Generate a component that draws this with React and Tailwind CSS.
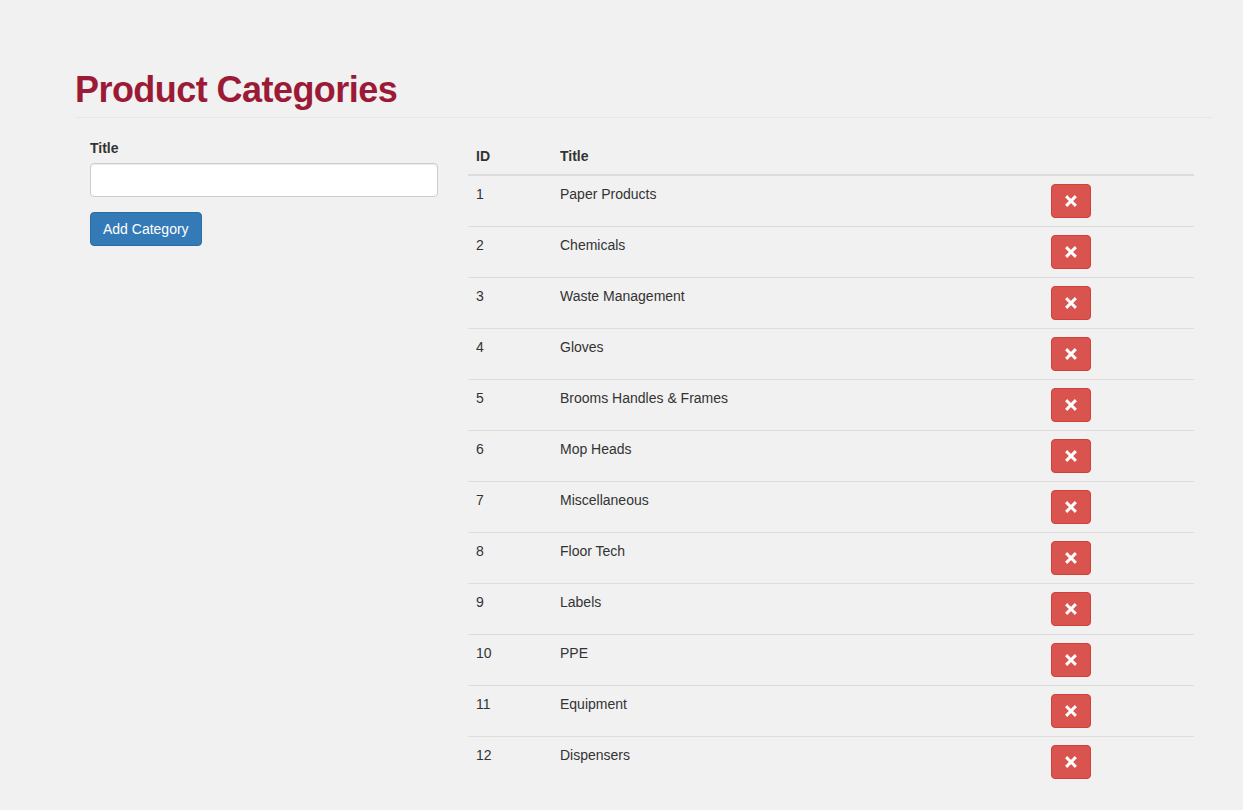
import React from "react";

const categories = [
  "Paper Products",
  "Chemicals",
  "Waste Management",
  "Gloves",
  "Brooms Handles & Frames",
  "Mop Heads",
  "Miscellaneous",
  "Floor Tech",
  "Labels",
  "PPE",
  "Equipment",
  "Dispensers",
];

const RemoveIcon = () => (
  <svg width="12" height="12" viewBox="0 0 12 12">
    <path d="M2.2 2.2 L9.8 9.8 M9.8 2.2 L2.2 9.8" stroke="white" strokeWidth="3" strokeLinecap="square" />
  </svg>
);

export default function App() {
  return (
    <div
      className="min-h-screen bg-[#f1f1f1] text-[14px] leading-[20px] text-[#333]"
      style={{ fontFamily: '"Liberation Sans", Arial, sans-serif' }}
    >
      <div className="ml-[75px] mr-[30px] pt-[70px]">
        {/* Page header */}
        <div className="border-b border-[#e8e8e8] pb-[7px] mb-[20px]">
          <h1 className="text-[36px] leading-[40px] font-bold tracking-[-0.55px] text-[#9b1b37]">Product Categories</h1>
        </div>

        <div className="flex w-[1134px]">
          {/* Form */}
          <div className="w-[378px] px-[15px]">
            <label className="block font-bold mb-[5px]">Title</label>
            <input
              type="text"
              className="block w-full h-[34px] bg-white border border-[#ccc] rounded-[4px] px-3 mb-[15px] shadow-[inset_0_1px_1px_rgba(0,0,0,0.075)]"
            />
            <button className="h-[34px] px-3 bg-[#337ab7] border border-[#2e6da4] rounded-[4px] text-white">
              Add Category
            </button>
          </div>

          {/* Table */}
          <div className="w-[756px] px-[15px]">
            <table className="w-full border-collapse">
              <thead>
                <tr className="border-b-2 border-[#ddd]">
                  <th className="text-left p-2 w-[84px]">ID</th>
                  <th className="text-left p-2 w-[491px]">Title</th>
                  <th className="p-2"></th>
                </tr>
              </thead>
              <tbody>
                {categories.map((title, i) => (
                  <tr key={i} className={i < categories.length - 1 ? "border-b border-[#ddd]" : ""}>
                    <td className="p-2 align-top">{i + 1}</td>
                    <td className="p-2 align-top">{title}</td>
                    <td className="p-2 align-top">
                      <button className="flex items-center justify-center w-[40px] h-[34px] bg-[#d9534f] border border-[#d43f3a] rounded-[4px]">
                        <RemoveIcon />
                      </button>
                    </td>
                  </tr>
                ))}
              </tbody>
            </table>
          </div>
        </div>
      </div>
    </div>
  );
}
